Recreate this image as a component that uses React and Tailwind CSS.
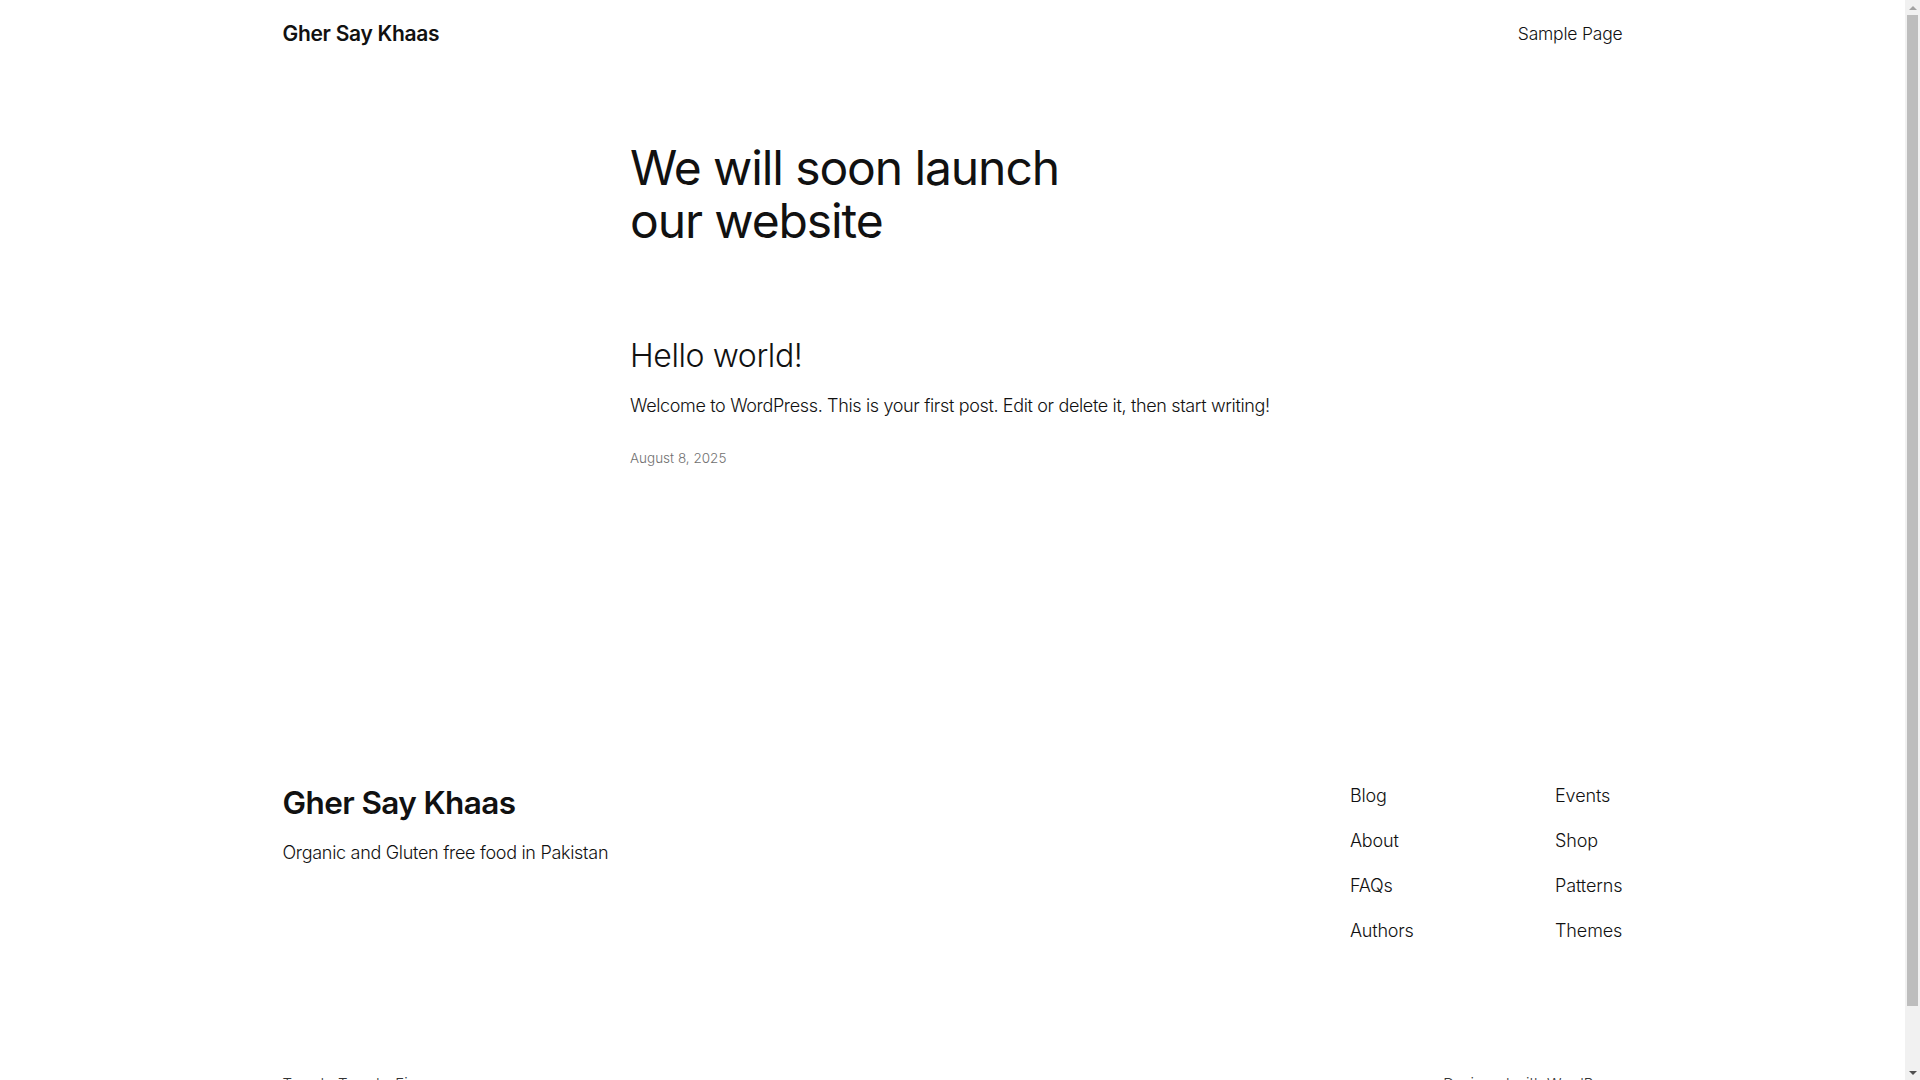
import React from 'react';

const navLeft = ['Blog', 'About', 'FAQs', 'Authors'];
const navRight = ['Events', 'Shop', 'Patterns', 'Themes'];

// Barra de desplazamiento del navegador tal como aparece en la captura
function FakeScrollbar() {
    return (
        <div className="fixed top-0 right-0 h-screen w-[15px] bg-[#f1f1f1] flex flex-col items-center">
            <div className="h-[15px] flex items-center justify-center">
                <div className="w-0 h-0 border-l-[4px] border-r-[4px] border-b-[4px] border-l-transparent border-r-transparent border-b-[#a3a3a3]" />
            </div>
            <div className="w-[11px] h-[991px] bg-[#bdbdbd]" />
            <div className="flex-1" />
            <div className="h-[15px] flex items-center justify-center">
                <div className="w-0 h-0 border-l-[4px] border-r-[4px] border-t-[4px] border-l-transparent border-r-transparent border-t-[#505050]" />
            </div>
        </div>
    );
}

export default function App() {
    return (
        <div className="min-h-screen bg-white text-[#111111] pr-[15px] font-['Inter','Noto_Sans',sans-serif]">
            {/* Cabecera */}
            <header className="max-w-[1340px] mx-auto h-[68px] flex items-center justify-between">
                <a className="text-[21px] font-semibold tracking-[-0.3px]">Gher Say Khaas</a>
                <nav className="text-[17.5px] font-light tracking-[-0.2px]">
                    <a>Sample Page</a>
                </nav>
            </header>

            {/* Contenido */}
            <main className="max-w-[645px] mx-auto pt-[74px]">
                <h1 className="text-[48px] leading-[1.1] font-normal tracking-[-1.1px]">
                    We will soon launch<br />our website
                </h1>

                <article className="mt-[90px]">
                    <h2 className="text-[32px] leading-[1.1] font-light tracking-[-0.4px]">Hello world!</h2>
                    <p className="mt-[19px] text-[18px] leading-[1.6] font-light tracking-[-0.35px]">
                        Welcome to WordPress. This is your first post. Edit or delete it, then start writing!
                    </p>
                    <p className="mt-[28px] text-[13.5px] leading-[1.4] font-light text-[#707070]">August 8, 2025</p>
                </article>
            </main>

            {/* Pie de página */}
            <footer className="max-w-[1340px] mx-auto mt-[315px] pb-[48px]">
                <div className="flex justify-between">
                    <div className="pt-[2px]">
                        <p className="text-[31.5px] leading-[1.2] font-semibold tracking-[-0.6px]">Gher Say Khaas</p>
                        <p className="mt-[17px] text-[18px] leading-[1.6] font-light tracking-[-0.3px]">
                            Organic and Gluten free food in Pakistan
                        </p>
                    </div>
                    <div className="flex">
                        <ul className="w-[205px] flex flex-col gap-[16px] text-[18px] leading-[1.6] font-light tracking-[-0.2px]">
                            {navLeft.map(item => <li key={item}>{item}</li>)}
                        </ul>
                        <ul className="flex flex-col gap-[16px] text-[18px] leading-[1.6] font-light tracking-[-0.1px]">
                            {navRight.map(item => <li key={item}>{item}</li>)}
                        </ul>
                    </div>
                </div>

                <div className="mt-[127px] flex justify-between text-[15px] leading-[1.4] font-light text-[#333]">
                    <p>Twenty Twenty-Five</p>
                    <p>Designed with WordPress</p>
                </div>
            </footer>

            <FakeScrollbar />
        </div>
    );
}
